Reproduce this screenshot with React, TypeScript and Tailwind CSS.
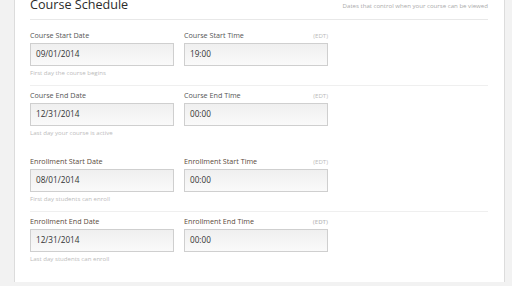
type Row = {
  date: { label: string; value: string; help: string };
  time: { label: string; value: string };
  tone: string;
  pad: string;
  divider?: boolean;
  boldZone?: boolean;
};

const rows: Row[] = [
  {
    date: { label: "Course Start Date", value: "09/01/2014", help: "First day the course begins" },
    time: { label: "Course Start Time", value: "19:00" },
    tone: "text-[#555555]",
    pad: "pt-[10px]",
    divider: true,
  },
  {
    date: { label: "Course End Date", value: "12/31/2014", help: "Last day your course is active" },
    time: { label: "Course End Time", value: "00:00" },
    tone: "text-[#555555]",
    pad: "pt-[4px]",
  },
  {
    date: { label: "Enrollment Start Date", value: "08/01/2014", help: "First day students can enroll" },
    time: { label: "Enrollment Start Time", value: "00:00" },
    tone: "text-[#5a4a3c]",
    pad: "pt-[11px]",
    divider: true,
  },
  {
    date: { label: "Enrollment End Date", value: "12/31/2014", help: "Last day students can enroll" },
    time: { label: "Enrollment End Time", value: "00:00" },
    tone: "text-[#5a4a3c]",
    pad: "pt-[4px]",
    boldZone: true,
  },
];

function Input({ value }: { value: string }) {
  return (
    <div className="flex h-[23px] items-center border border-[#cfcfcf] bg-gradient-to-b from-[#efefef] to-[#fafafa] pl-[5px] text-[8.2px] text-[#333333]">
      {value}
    </div>
  );
}

function ScheduleRow({ row }: { row: Row }) {
  return (
    <div className={`grid grid-cols-[144px_144px] gap-x-[10px] pb-[8px] ${row.pad} ${row.divider ? "border-b border-[#efefef]" : ""}`}>
      <div className="flex flex-col">
        <div className={`mb-[3px] h-[10px] text-[7.2px] leading-[10px] ${row.tone}`}>{row.date.label}</div>
        <Input value={row.date.value} />
        <div className="mt-[3px] h-[8px] text-[6.1px] leading-[8px] text-[#bbbbbb]">{row.date.help}</div>
      </div>
      <div className="flex flex-col">
        <div className="mb-[3px] flex h-[10px] items-baseline justify-between leading-[10px]">
          <span className={`text-[7.2px] ${row.tone}`}>{row.time.label}</span>
          <span className={`text-[6.1px] text-[#bbbbbb] ${row.boldZone ? "font-semibold" : ""}`}>(EDT)</span>
        </div>
        <Input value={row.time.value} />
      </div>
    </div>
  );
}

export default function App() {
  return (
    <div className="h-screen overflow-hidden bg-[#f2f2f2] font-['Open_Sans',sans-serif]">
      <div className="ml-[14px] h-full w-[491px] border-x border-[#dcdcdc] bg-white pl-[15px] pr-[16px]">
        <div className="-mt-[4px] flex items-start justify-between border-b border-[#e8e8e8] pb-[5px]">
          <h2 className="text-[12.6px] leading-[18px] text-[#2b2b2b]">Course Schedule</h2>
          <p className="mt-[6px] text-[6.1px] leading-[8px] text-[#aaaaaa]">
            Dates that control when your course can be viewed
          </p>
        </div>
        {rows.map((row) => (
          <ScheduleRow key={row.date.label} row={row} />
        ))}
      </div>
    </div>
  );
}
